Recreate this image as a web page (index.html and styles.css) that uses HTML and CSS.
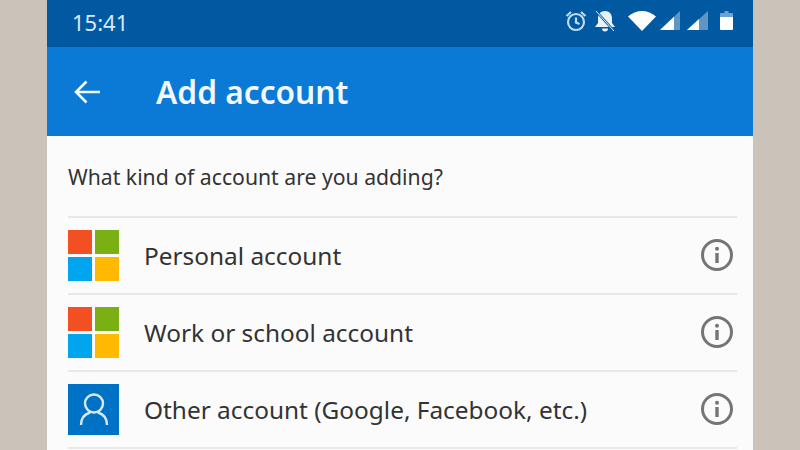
FILE: index.html
```html
<!DOCTYPE html>
<html lang="en">
<head>
  <meta charset="UTF-8" />
  <meta name="viewport" content="width=device-width, initial-scale=1.0"/>
  <title>Add account</title>
  <link rel="stylesheet" href="styles.css">
</head>
<body>
  <div class="phone">
    <div class="status-bar">
      <span class="clock">15:41</span>
      <div class="status-icons">
        <svg class="alarm" width="22" height="22" viewBox="0 0 22 22" fill="none" stroke="#bfdcf2" stroke-width="2.200">
          <circle cx="11" cy="12" r="8"/>
          <path d="M11 7.500v5l3.500 1.500"/>
          <path d="M1.500 6l4.500-4M20.500 6L16 2"/>
        </svg>
        <svg class="bell" width="24" height="22" viewBox="0 0 24 22">
          <path d="M12 1c-4.500 0-7 3-7 7.500V13l-3 4h20l-3-4V8.500C19 4 16.500 1 12 1z" fill="#e8f2fa"/>
          <path d="M9 18.500h6a3 3 0 0 1-6 0z" fill="#e8f2fa"/>
          <path d="M3 1l18 20" stroke="#0059a1" stroke-width="2.500"/>
          <path d="M3 1l18 20" stroke="#e8f2fa" stroke-width="1"/>
        </svg>
        <svg class="wifi" width="30" height="22" viewBox="0 0 30 22">
          <path d="M1 6.500C5 3 10 1 15 1s10 2 14 5.500L15 21z" fill="#fff"/>
        </svg>
        <svg class="signal" width="20" height="22" viewBox="0 0 20 22">
          <path d="M0 20L20 1v19z" fill="#5f96c6"/>
          <path d="M0 20L14 6.700V20z" fill="#fff"/>
        </svg>
        <svg class="signal-two" width="21" height="22" viewBox="0 0 21 22">
          <path d="M0 20L21 1v19z" fill="#5f96c6"/>
          <path d="M0 20L12 9v11z" fill="#fff"/>
        </svg>
        <svg class="battery" width="13" height="22" viewBox="0 0 13 22">
          <path d="M4.500 1h4v2H12a1 1 0 0 1 1 1v3H0V4a1 1 0 0 1 1-1h3.500z" fill="#6fa3cf"/>
          <path d="M0 7h13v12a1 1 0 0 1-1 1H1a1 1 0 0 1-1-1z" fill="#fff"/>
        </svg>
      </div>
    </div>

    <div class="app-bar">
      <svg class="back" width="28" height="26" viewBox="0 0 28 26" fill="none" stroke="#f2f8fd" stroke-width="2.600">
        <path d="M27 13H3M13.500 2.500L3 13l10.500 10.500"/>
      </svg>
      <h1>Add account</h1>
    </div>

    <div class="content">
      <p class="question">What kind of account are you adding?</p>
      <ul class="accounts">
        <li class="account">
          <div class="ms-logo"><i class="red"></i><i class="green"></i><i class="blue"></i><i class="yellow"></i></div>
          <span class="label">Personal account</span>
          <svg class="info" width="32" height="32" viewBox="0 0 32 32"><circle cx="16" cy="16" r="14.500" fill="none" stroke="#757575" stroke-width="3"/><rect x="14.300" y="14" width="3.400" height="10" fill="#757575"/><circle cx="16" cy="9.800" r="2" fill="#757575"/></svg>
        </li>
        <li class="account">
          <div class="ms-logo"><i class="red"></i><i class="green"></i><i class="blue"></i><i class="yellow"></i></div>
          <span class="label">Work or school account</span>
          <svg class="info" width="32" height="32" viewBox="0 0 32 32"><circle cx="16" cy="16" r="14.500" fill="none" stroke="#757575" stroke-width="3"/><rect x="14.300" y="14" width="3.400" height="10" fill="#757575"/><circle cx="16" cy="9.800" r="2" fill="#757575"/></svg>
        </li>
        <li class="account">
          <div class="other-logo">
            <svg width="30" height="36" viewBox="0 0 30 36" fill="none" stroke="#d5e9f8" stroke-width="2.400">
              <circle cx="15" cy="11.500" r="9"/>
              <path d="M2 33c0-7 4-11 9-12.500M28 33c0-7-4-11-9-12.500"/>
            </svg>
          </div>
          <span class="label">Other account (Google, Facebook, etc.)</span>
          <svg class="info" width="32" height="32" viewBox="0 0 32 32"><circle cx="16" cy="16" r="14.500" fill="none" stroke="#757575" stroke-width="3"/><rect x="14.300" y="14" width="3.400" height="10" fill="#757575"/><circle cx="16" cy="9.800" r="2" fill="#757575"/></svg>
        </li>
      </ul>
    </div>
  </div>
</body>
</html>
```

FILE: styles.css
```css
html, body {
  height: 100%;
}
body {
  margin: 0;
  background: #cbc2b9;
  font-family: 'Noto Sans', sans-serif;
  overflow: hidden;
}
.phone {
  width: 706px;
  height: 450px;
  margin: 0 auto;
  background: #fbfbfb;
  overflow: hidden;
}
.status-bar {
  height: 47px;
  background: #0059a1;
  display: flex;
  align-items: center;
  justify-content: space-between;
  padding: 0 20px 0 25px;
  color: #d8e9f6;
}
.clock {
  font-size: 22px;
  margin-bottom: 3px;
}
.status-icons {
  display: flex;
  align-items: center;
  margin-bottom: 6px;
}
.bell { margin-left: 6px; }
.wifi { margin-left: 10px; }
.signal { margin-left: 3px; }
.signal-two { margin-left: 7px; }
.battery { margin-left: 12px; }
.app-bar {
  height: 89px;
  background: #0a7ad6;
  display: flex;
  align-items: center;
  padding-left: 26px;
  gap: 55px;
}
h1 {
  margin: 0;
  font-size: 31.7px;
  font-weight: 600;
  color: #f2f8fd;
}
.content {
  padding: 0 16px 0 21px;
}
.question {
  margin: 0;
  height: 82px;
  box-sizing: border-box;
  padding-top: 28px;
  font-size: 21.2px;
  line-height: 26px;
  color: #333;
  border-bottom: 2px solid #e8e8e8;
}
.accounts {
  list-style: none;
  margin: 0;
  padding: 0;
}
.account {
  height: 75px;
  display: flex;
  align-items: center;
  border-bottom: 2px solid #e8e8e8;
}
.ms-logo {
  width: 51px;
  height: 51px;
  display: grid;
  grid-template-columns: 1fr 1fr;
  gap: 3px;
  flex: none;
}
.red { background: #f25022; }
.green { background: #7bb015; }
.blue { background: #00a4ef; }
.yellow { background: #ffb900; }
.other-logo {
  width: 51px;
  height: 51px;
  background: #0072c6;
  display: flex;
  align-items: center;
  justify-content: center;
  flex: none;
}
.label {
  margin-left: 25px;
  font-size: 24.4px;
  color: #333;
  flex: 1;
}
.info {
  flex: none;
  margin: 0 4px 2px 0;
}
```
